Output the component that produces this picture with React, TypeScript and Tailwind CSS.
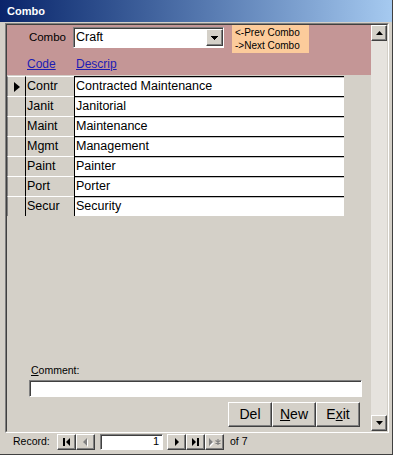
import React from 'react';

const rows = [
  ['Contr', 'Contracted Maintenance'],
  ['Janit', 'Janitorial'],
  ['Maint', 'Maintenance'],
  ['Mgmt', 'Management'],
  ['Paint', 'Painter'],
  ['Port', 'Porter'],
  ['Secur', 'Security'],
];

const raised =
  'bg-[#d4d0c8] border border-t-white border-l-white border-r-[#404040] border-b-[#404040] shadow-[inset_-1px_-1px_0_#808080]';
const sunken =
  'bg-white border border-t-[#808080] border-l-[#808080] border-r-white border-b-white shadow-[inset_1px_1px_0_#404040]';

function NavButton({ children }: { children: React.ReactNode }) {
  return <div className={`${raised} w-[19px] h-[16px] flex items-center justify-center`}>{children}</div>;
}

export default function App() {
  return (
    <div className="w-[393px] h-[455px] bg-[#d4d0c8] flex flex-col overflow-hidden font-['Liberation_Sans',Arial,sans-serif] text-black border-r border-b border-r-[#404040] border-b-[#404040]">
      {/* title bar */}
      <div className="h-[22px] shrink-0 flex items-center pl-[7px] text-[11px] font-bold text-white bg-linear-to-r from-[#0a246a] to-[#a6caf0]">
        Combo
      </div>

      {/* form frame */}
      <div className="mt-[1px] ml-[5px] mr-[3px] h-[410px] shrink-0 border border-t-[#808080] border-l-[#808080] border-r-white border-b-white">
        <div className="h-full flex border border-t-[#404040] border-l-[#404040] border-r-[#d4d0c8] border-b-[#d4d0c8]">
          <div className="w-[364px] flex flex-col">
            {/* header */}
            <div className="h-[50px] shrink-0 bg-[#c49696] flex flex-col">
              <div className="h-[28px] flex items-start">
                <div className="w-[59px] mt-[5px] text-right text-[11.5px] leading-[14px]">Combo</div>
                <div className={`${sunken} ml-[7px] mt-[2px] w-[151px] h-[21px] flex items-center`}>
                  <span className="flex-1 pl-[2px] text-[12.5px] leading-[15px]">Craft</span>
                  <div className={`${raised} w-[17px] h-[17px] flex items-center justify-center`}>
                    <svg width="7" height="4" viewBox="0 0 7 4" shapeRendering="crispEdges">
                      <path d="M0 0H7L3.5 4z" fill="black" />
                    </svg>
                  </div>
                </div>
                <div className="ml-[8px] w-[77px] h-[28px] bg-[#fccb9b] pl-[3px] pt-[2px] text-[10px] leading-[12.5px]">
                  <div>&lt;-Prev Combo</div>
                  <div>-&gt;Next Combo</div>
                </div>
              </div>
              <div className="h-[22px] flex items-center pl-[20px] text-[12px] text-[#1c1cb4]">
                <span className="w-[49px] underline">Code</span>
                <span className="underline">Descrip</span>
              </div>
            </div>

            {/* detail */}
            <div className="flex-1 flex flex-col pt-[1px] pb-[4px] bg-[#d4d0c8]">
              <div className="flex flex-col">
                {rows.map(([code, desc], i) => (
                  <div key={code} className="h-[20px] flex">
                    <div className="w-[18px] bg-[#d4d0c8] border-t border-l border-t-white border-l-[#808080] flex items-center justify-center">
                      {i === 0 && (
                        <svg width="6" height="10" viewBox="0 0 6 10">
                          <path d="M0 0L6 5L0 10z" fill="black" />
                        </svg>
                      )}
                    </div>
                    <div className="w-[49px] bg-[#d4d0c8] border-l border-t border-l-black border-t-white pl-[1px] text-[12.5px] leading-[18px]">
                      {code}
                    </div>
                    <div className="w-[270px] bg-white border-l border-t border-l-black border-t-black shadow-[inset_0_1px_0_#c0c0c0] pl-[1px] pt-[1px] text-[12.5px] leading-[17px]">
                      {desc}
                    </div>
                  </div>
                ))}
              </div>
              <div className="flex-1" />
              <div className="pl-[24px] text-[10.5px] leading-[14px]">
                <span className="underline">C</span>omment:
              </div>
              <div className={`${sunken} ml-[22px] mt-[3px] w-[333px] h-[17px]`} />
              <div className="mt-[5px] ml-[221px] flex text-[14px]">
                <div className={`${raised} w-[44px] h-[25px] flex items-center justify-center`}>Del</div>
                <div className={`${raised} w-[44px] h-[25px] flex items-center justify-center`}>
                  <span>
                    <span className="underline">N</span>ew
                  </span>
                </div>
                <div className={`${raised} w-[44px] h-[25px] flex items-center justify-center`}>
                  <span>
                    E<span className="underline">x</span>it
                  </span>
                </div>
              </div>
            </div>
          </div>

          {/* scrollbar */}
          <div className="w-[16px] flex flex-col">
            <div className={`${raised} h-[16px] flex items-center justify-center`}>
              <svg width="7" height="4" viewBox="0 0 7 4">
                <path d="M3.5 0L7 4H0z" fill="black" />
              </svg>
            </div>
            <div className="flex-1 bg-[#e6e3de]" />
            <div className={`${raised} h-[16px] flex items-center justify-center`}>
              <svg width="7" height="4" viewBox="0 0 7 4">
                <path d="M0 0H7L3.5 4z" fill="black" />
              </svg>
            </div>
          </div>
        </div>
      </div>

      {/* record navigation */}
      <div className="h-[18px] shrink-0 flex items-center pl-[13px] text-[10.5px]">
        <span className="w-[44px]">Record:</span>
        <NavButton>
          <svg width="7" height="8" viewBox="0 0 7 8">
            <rect x="0" y="0" width="2" height="8" fill="black" />
            <path d="M7 0V8L3 4z" fill="black" />
          </svg>
        </NavButton>
        <NavButton>
          <svg width="6" height="9" viewBox="0 0 6 9">
            <path d="M5 1V9L1 5z" fill="white" />
            <path d="M4 0V8L0 4z" fill="#808080" />
          </svg>
        </NavButton>
        <div className={`${sunken} ml-[5px] w-[63px] h-[16px] text-right pr-[3px] text-[11px] leading-[13px]`}>1</div>
        <div className="ml-[4px]" />
        <NavButton>
          <svg width="4" height="8" viewBox="0 0 4 8">
            <path d="M0 0V8L4 4z" fill="black" />
          </svg>
        </NavButton>
        <NavButton>
          <svg width="7" height="8" viewBox="0 0 7 8">
            <path d="M0 0V8L4 4z" fill="black" />
            <rect x="5" y="0" width="2" height="8" fill="black" />
          </svg>
        </NavButton>
        <NavButton>
          <svg width="12" height="9" viewBox="0 0 12 9">
            <path d="M1 1V9L5 5z" fill="white" />
            <path d="M0 0V8L4 4z" fill="#808080" />
            <path d="M9 1V7M6.5 2.5L11.5 5.5M11.5 2.5L6.5 5.5" stroke="#808080" strokeWidth="1.2" />
          </svg>
        </NavButton>
        <span className="ml-[6px]">of 7</span>
      </div>
    </div>
  );
}
